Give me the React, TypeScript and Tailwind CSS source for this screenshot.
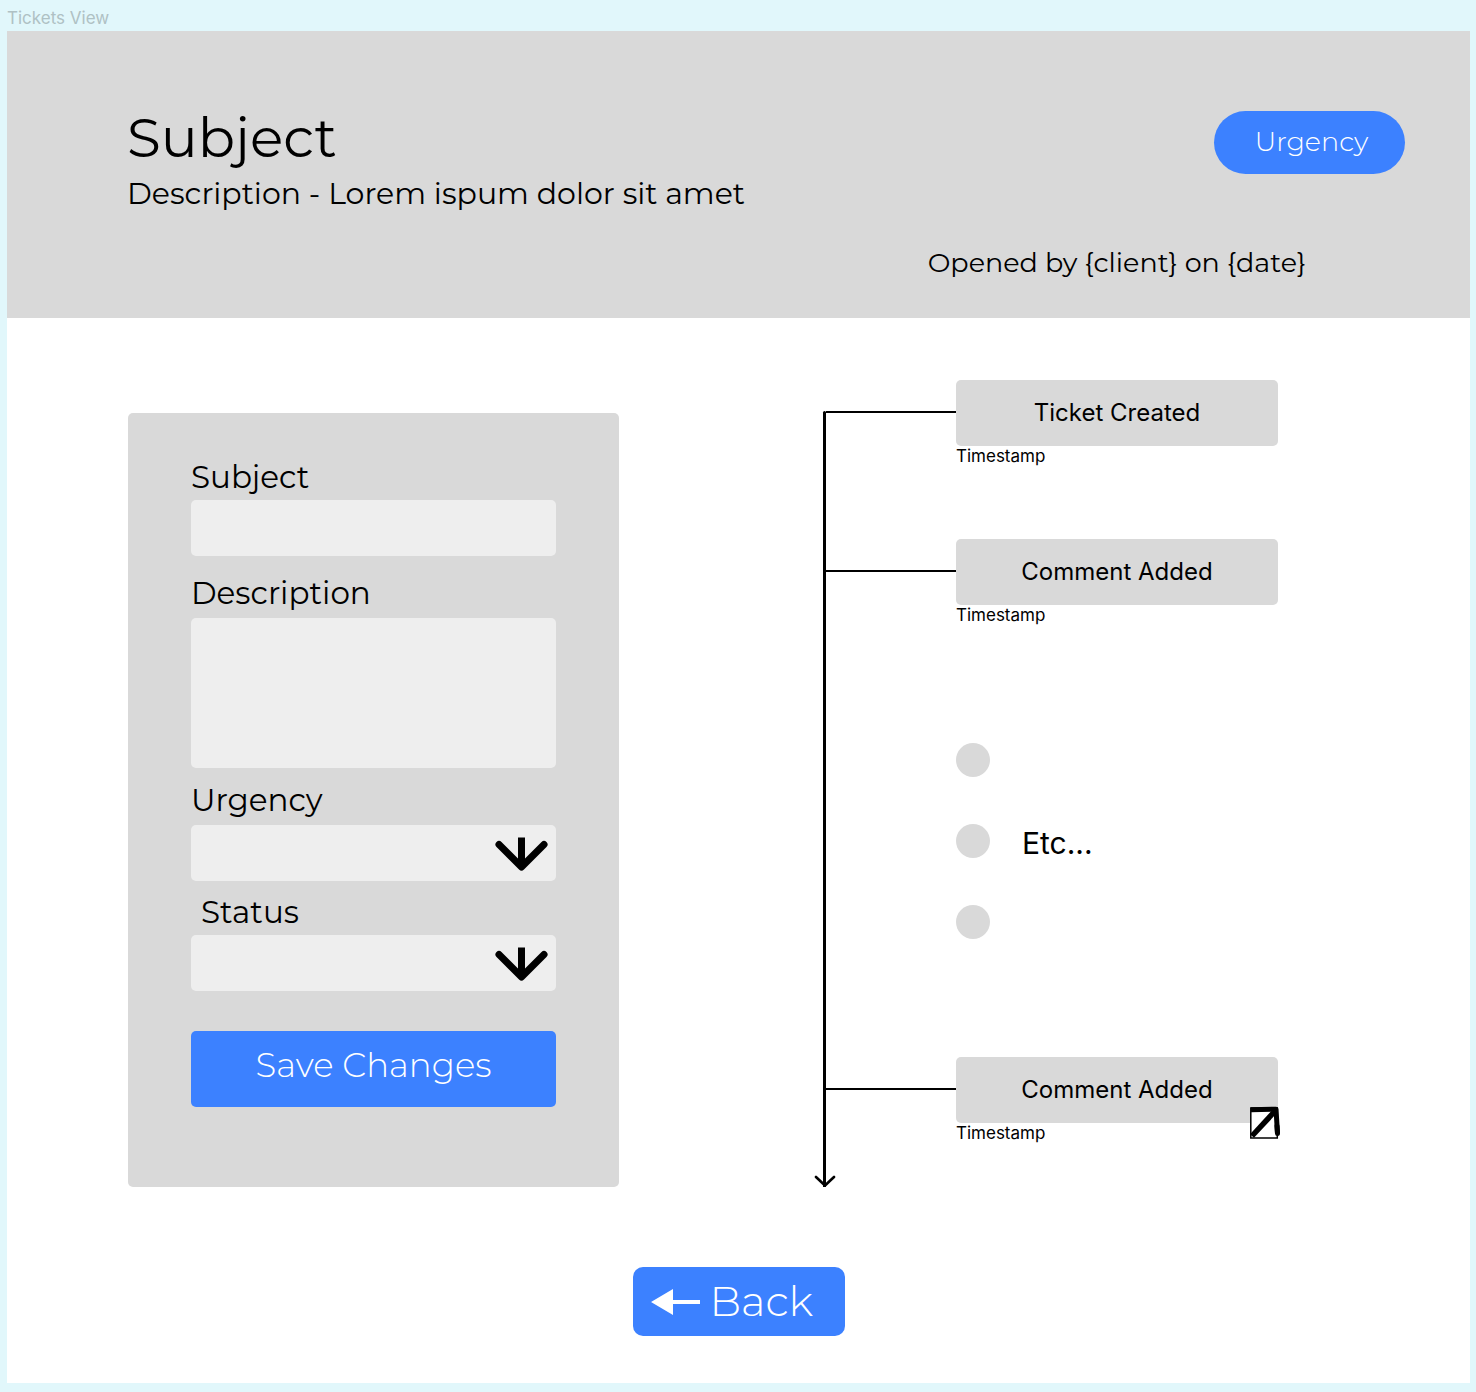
import React from "react";

const display = "font-[Montserrat,Inter,sans-serif]";

function DownArrow() {
  return (
    <svg
      className="pointer-events-none absolute right-[8px] top-[12px] h-[34px] w-[53px]"
      viewBox="0 0 53 34"
      fill="none"
      stroke="black"
      strokeWidth="7"
      aria-hidden="true"
    >
      <path d="M26.5 0.5V28" />
      <path d="M4 7.5L26.5 30L49 7.5" strokeLinecap="round" strokeLinejoin="round" />
    </svg>
  );
}

function Label({ htmlFor, children, className = "" }: { htmlFor: string; children: string; className?: string }) {
  return (
    <label htmlFor={htmlFor} className={`${display} block text-[31px] leading-[40px] ${className}`}>
      {children}
    </label>
  );
}

function SelectBox({ id }: { id: string }) {
  return (
    <div className="relative">
      <select id={id} className="block h-[56px] w-full appearance-none rounded-[5px] bg-[#eeeeee] px-4 pr-16 text-2xl" />
      <DownArrow />
    </div>
  );
}

function Event({ title, children }: { title: string; children?: React.ReactNode }) {
  return (
    <li className="flex items-start">
      <div className="mt-[31px] h-[2px] flex-1 bg-black" />
      <div className="relative w-[322px]">
        <div className="flex h-[66px] items-center justify-center rounded-[5px] bg-[#d9d9d9] text-[24px]">{title}</div>
        <div className="text-[17px] leading-[20px]">Timestamp</div>
        {children}
      </div>
    </li>
  );
}

function Dot() {
  return <div className="size-[34px] rounded-full bg-[#d9d9d9]" />;
}

export default function App() {
  return (
    <div className="min-h-screen bg-[#e1f7fb] pb-[9px] pl-[7px] pr-[6px] font-[Inter,sans-serif] text-black">
      <div className="flex h-[31px] items-center pt-[6px] text-[17px] text-[#afc1c4]">Tickets View</div>
      <div className="bg-white pb-[47px]">
        <header className="flex h-[287px] flex-col justify-between bg-[#d9d9d9] pb-[35px] pl-[120px] pr-[65px] pt-[73px]">
          <div className="flex items-start justify-between">
            <div className={display}>
              <h1 className="text-[55px] leading-[68px]">Subject</h1>
              <p className="text-[30px] leading-[44px]">Description - Lorem ispum dolor sit amet</p>
            </div>
            <button
              type="button"
              className={`${display} mt-[7px] h-[63px] w-[191px] rounded-full bg-[#3c81ff] pl-[4px] text-[27px] font-light text-white`}
            >
              Urgency
            </button>
          </div>
          <p className={`${display} self-end pr-[99px] text-[27px] leading-[40px]`}>
            Opened by {"{client}"} on {"{date}"}
          </p>
        </header>

        <main className="grid grid-cols-[491fr_455fr] gap-x-[204px] pl-[121px] pr-[192px] pt-[62px]">
          <form className="mt-[33px] rounded-[5px] bg-[#d9d9d9] px-[63px] pb-[80px] pt-[44px]" onSubmit={(e) => e.preventDefault()}>
            <Label htmlFor="subject">Subject</Label>
            <input id="subject" type="text" className="mt-[3px] block h-[56px] w-full rounded-[5px] bg-[#eeeeee] px-4 text-2xl" />
            <Label htmlFor="description" className="mt-[17px]">Description</Label>
            <textarea id="description" className="mt-[5px] block h-[150px] w-full resize-none rounded-[5px] bg-[#eeeeee] p-4 text-2xl" />
            <Label htmlFor="urgency" className="mb-[5px] mt-[12px]">Urgency</Label>
            <SelectBox id="urgency" />
            <Label htmlFor="status" className="mb-[3px] mt-[11px] pl-[10px]">Status</Label>
            <SelectBox id="status" />
            <button
              type="submit"
              className={`${display} mt-[40px] block h-[76px] w-full rounded-[5px] bg-[#3c81ff] pb-[8px] text-[34px] font-light text-white`}
            >
              Save Changes
            </button>
          </form>

          <section className="flex" aria-label="Ticket history">
            <div className="relative mt-[31px] w-[3px] rounded-t-full bg-black">
              <svg
                className="absolute bottom-0 left-1/2 h-[13px] w-[22px] -translate-x-1/2"
                viewBox="0 0 22 13"
                fill="none"
                stroke="black"
                strokeWidth="2.6"
                strokeLinecap="round"
                strokeLinejoin="round"
                aria-hidden="true"
              >
                <path d="M2 3L11 11.5L20 3" />
              </svg>
            </div>
            <ul className="flex-1">
              <Event title="Ticket Created" />
              <li className="h-[73px]" aria-hidden="true" />
              <Event title="Comment Added" />
              <li className="flex justify-end py-[118px]">
                <div className="flex w-[322px] items-center gap-[32px]">
                  <div className="flex flex-col gap-[47px]">
                    <Dot />
                    <Dot />
                    <Dot />
                  </div>
                  <span className="pt-[4px] text-[30px]">Etc...</span>
                </div>
              </li>
              <Event title="Comment Added">
                <button type="button" aria-label="Open comment" className="absolute -right-[3px] top-[49px]">
                  <svg className="block h-[34px] w-[32px]" viewBox="0 0 32 34" fill="none" stroke="black" aria-hidden="true">
                    <rect x="1.8" y="2" width="26.5" height="30" fill="white" strokeWidth="1.5" />
                    <path d="M3 30L27 4" strokeWidth="5.5" />
                    <path d="M2 3.7L27 3.2L28.5 27.5" strokeWidth="5" strokeLinejoin="round" />
                    <path d="M28 20L28.5 27.5" strokeWidth="5" strokeLinecap="round" />
                  </svg>
                </button>
              </Event>
            </ul>
          </section>
        </main>

        <div className="mt-[80px] flex justify-center">
          <button
            type="button"
            className={`${display} flex h-[69px] w-[212px] items-center gap-[10px] rounded-[10px] bg-[#3c81ff] pl-[18px] text-[42px] font-light text-white`}
          >
            <svg className="h-[26px] w-[49px]" viewBox="0 0 49 26" fill="currentColor" aria-hidden="true">
              <path d="M0 13L22 0V11H49V15H22V26Z" />
            </svg>
            Back
          </button>
        </div>
      </div>
    </div>
  );
}
